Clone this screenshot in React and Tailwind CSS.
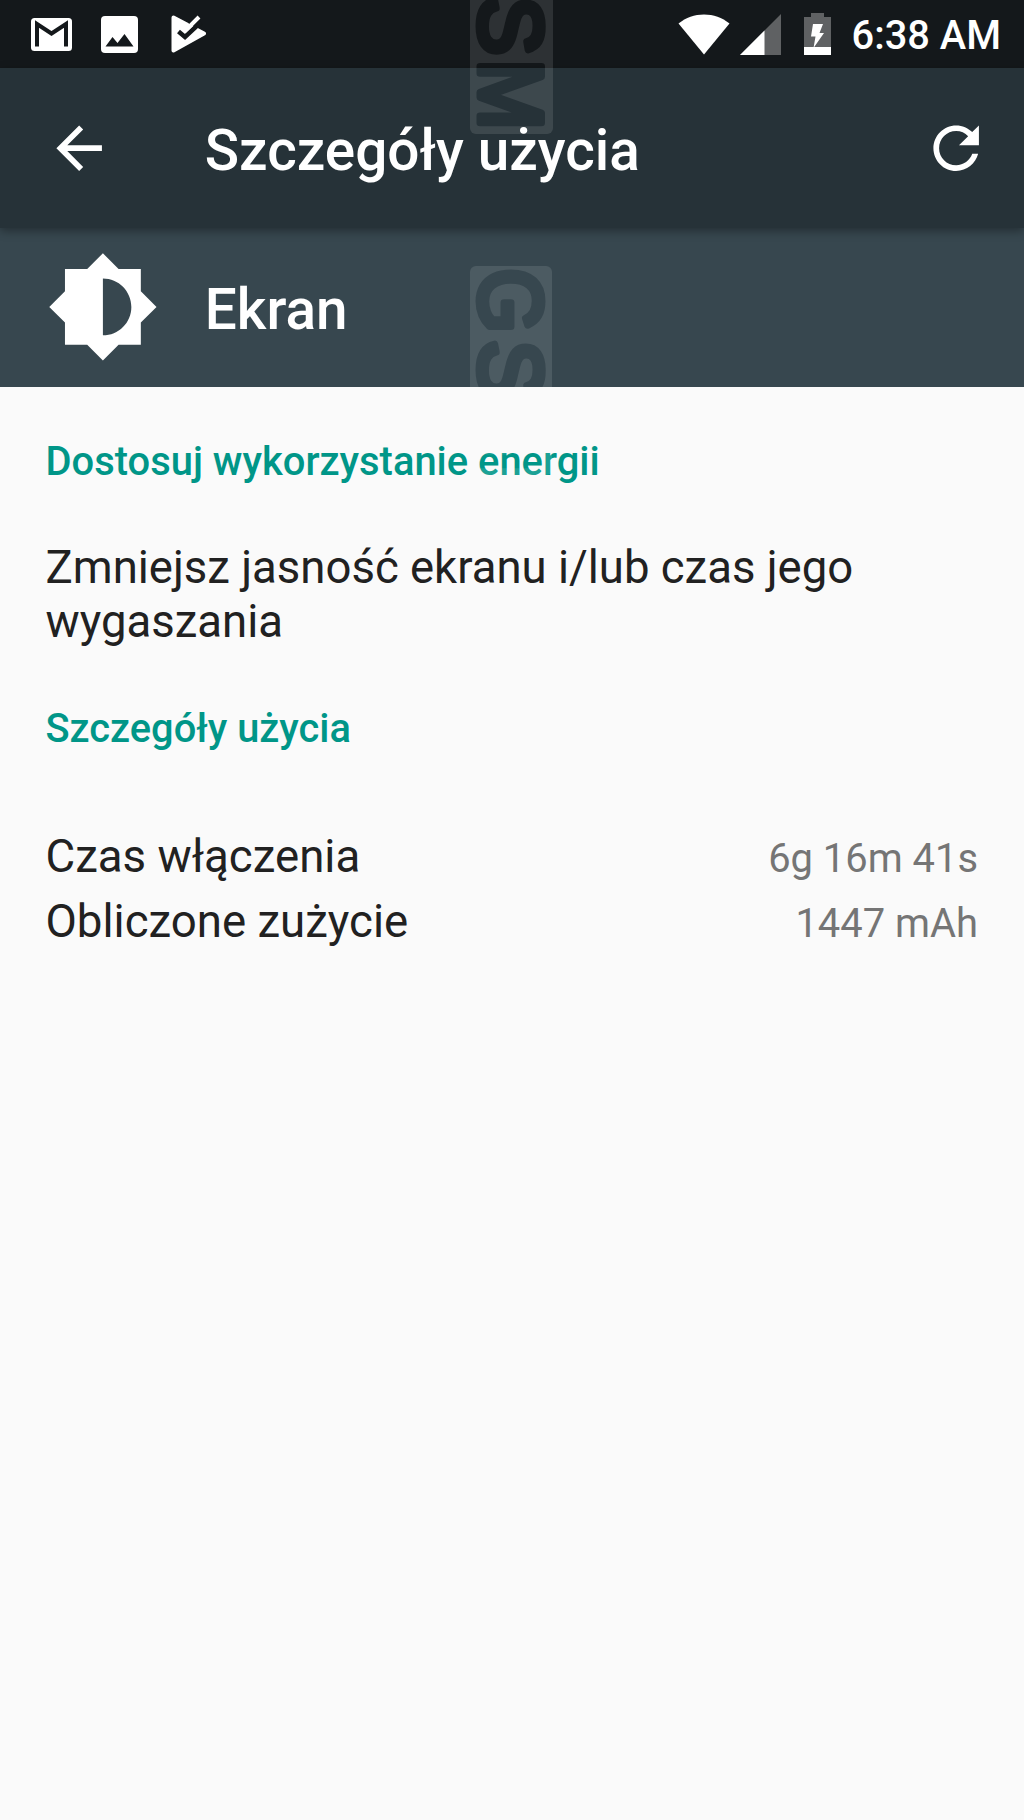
import React from "react";

const rows = [
  { label: "Czas włączenia", value: "6g 16m 41s" },
  { label: "Obliczone zużycie", value: "1447 mAh" },
];

function StatusBar() {
  return (
    <div className="h-[68px] bg-[#14181b] flex items-center justify-between pl-[31px] pr-[23px]">
      <div className="flex items-center h-full">
        <svg className="w-[41px] h-[33px]" viewBox="0 0 41 33">
          <rect width="41" height="33" rx="3.5" fill="#fff" />
          <path d="M6 28.5V6L20.5 15.5L35 6V28.5" fill="none" stroke="#14181b" strokeWidth="4" />
        </svg>
        <svg className="w-[37px] h-[37px] ml-[29px]" viewBox="0 0 37 37">
          <rect width="37" height="37" rx="4" fill="#fff" />
          <path d="M4.500 30.500L11.500 21L16.500 27L23.500 18L32.500 30.500Z" fill="#14181b" />
        </svg>
        <svg className="w-[36px] h-[38px] ml-[33px]" viewBox="0 0 36 38">
          <path d="M2.500 2.500L33 18.500L2.500 35.500Z" fill="#fff" stroke="#fff" strokeWidth="4" strokeLinejoin="round" />
          <path d="M17.500 8.500L24 4L32 10L27 12.500Z" fill="#14181b" />
          <path d="M7.500 16.500L14 22L30 7" fill="none" stroke="#14181b" strokeWidth="4.500" />
          <path d="M11 12.500L14.500 15.500L28 2" fill="none" stroke="#fff" strokeWidth="4" />
        </svg>
      </div>
      <div className="flex items-center h-full">
        <svg className="w-[52px] h-[41px]" viewBox="0 0 52 41">
          <path d="M26 40.500L.5 9.500C8 3.500 16.500 .5 26 .5S44 3.500 51.500 9.500Z" fill="#fff" />
        </svg>
        <svg className="w-[41px] h-[41px] ml-[10px]" viewBox="0 0 41 41">
          <path d="M41 0V41H0Z" fill="#5f6163" />
          <path d="M24.500 16.500V41H0Z" fill="#fff" />
        </svg>
        <svg className="w-[27px] h-[42px] ml-[23px]" viewBox="0 0 27 42">
          <path d="M7 0H20V4H27V34H0V4H7Z" fill="#5f6163" />
          <path d="M0 34H27V42H0Z" fill="#fff" />
          <path d="M9 11H19L15.500 20H20L9.500 35L11.500 23.500H7Z" fill="#fff" />
        </svg>
        <span className="ml-[21px] text-[39.800px] leading-[68px] font-medium text-white pt-[4px]">6:38 AM</span>
      </div>
    </div>
  );
}

function Toolbar() {
  return (
    <div className="relative h-[160px] bg-[#263238] flex items-center pl-[45px] pr-[34px] shadow-[0_3px_9px_rgba(0,0,0,0.35)]">
      <svg className="w-[68.300px] h-[68.300px]" viewBox="0 0 24 24" fill="#fff">
        <path d="M20 11H7.830l5.590-5.590L12 4l-8 8 8 8 1.410-1.410L7.830 13H20v-2z" />
      </svg>
      <h1 className="ml-[91.500px] pt-[5px] text-[56.700px] leading-[68px] font-medium text-white">Szczegóły użycia</h1>
      <svg className="w-[68.300px] h-[68.300px] ml-auto" viewBox="0 0 24 24" fill="#fff">
        <path d="M17.650 6.350C16.200 4.900 14.210 4 12 4c-4.420 0-7.990 3.580-7.990 8s3.570 8 7.990 8c3.730 0 6.840-2.550 7.730-6h-2.080c-.82 2.330-3.040 4-5.650 4-3.310 0-6-2.690-6-6s2.690-6 6-6c1.660 0 3.140.69 4.220 1.780L13 11h7V4l-2.350 2.350z" />
      </svg>
    </div>
  );
}

function AppHeader() {
  return (
    <div className="h-[159px] bg-[#37474f] flex items-center pl-[45.500px]">
      <svg className="w-[113.800px] h-[113.800px] mb-px" viewBox="0 0 24 24" fill="#fff">
        <path d="M20 15.310L23.310 12 20 8.690V4h-4.690L12 .69 8.690 4H4v4.690L.69 12 4 15.310V20h4.690L12 23.310 15.310 20H20v-4.690zM12 18V6c3.310 0 6 2.690 6 6s-2.690 6-6 6z" />
      </svg>
      <h2 className="ml-[45.500px] pt-[4px] text-[56.700px] leading-[68px] font-medium text-white">Ekran</h2>
    </div>
  );
}

// Translucent vertical badges with the lettering cut out of them
function Watermark() {
  return (
    <svg className="absolute left-[470px] top-0 w-[83px] h-[480px] pointer-events-none" viewBox="0 0 83 480">
      <mask id="badge" maskUnits="userSpaceOnUse" x="0" y="0" width="83" height="480">
        <rect y="-76" width="83" height="210" rx="6" fill="#fff" />
        <rect y="266" width="82" height="209" rx="6" fill="#fff" />
        <g fontFamily="Liberation Sans, sans-serif" fontSize="89" fill="#000" stroke="#000" strokeWidth="7" strokeLinejoin="round">
          <text transform="translate(10 -4) rotate(90)">S</text>
          <text transform="translate(10 59.500) rotate(90) scale(.95 1)">M</text>
          <text transform="translate(10 268.500) rotate(90) scale(.93 1)">G</text>
          <text transform="translate(10 340) rotate(90)">S</text>
          <text transform="translate(10 401.500) rotate(90) scale(.95 1)">M</text>
        </g>
      </mask>
      <rect width="83" height="480" fill="#fff" fillOpacity="0.11" mask="url(#badge)" />
    </svg>
  );
}

export default function App() {
  return (
    <div className="relative w-[1024px] h-[1820px] overflow-hidden bg-[#fafafa] font-['Roboto',sans-serif] text-[#212121]">
      <StatusBar />
      <Toolbar />
      <AppHeader />

      <main className="pl-[45.500px] pr-[46px] pt-[51px]">
        <h3 className="text-[39.900px] leading-[48px] font-medium text-[#009688]">Dostosuj wykorzystanie energii</h3>
        <p className="mt-[55px] text-[45.500px] leading-[54px]">Zmniejsz jasność ekranu i/lub czas jego wygaszania</p>
        <h3 className="mt-[56px] text-[39.800px] leading-[48px] font-medium text-[#009688]">Szczegóły użycia</h3>
        <div className="mt-[72px]">
          {rows.map((row) => (
            <div key={row.label} className="flex items-baseline justify-between h-[65px] leading-[64px]">
              <span className="text-[45.600px]">{row.label}</span>
              <span className="text-[39.900px] text-[#757575]">{row.value}</span>
            </div>
          ))}
        </div>
      </main>

      <Watermark />
    </div>
  );
}
